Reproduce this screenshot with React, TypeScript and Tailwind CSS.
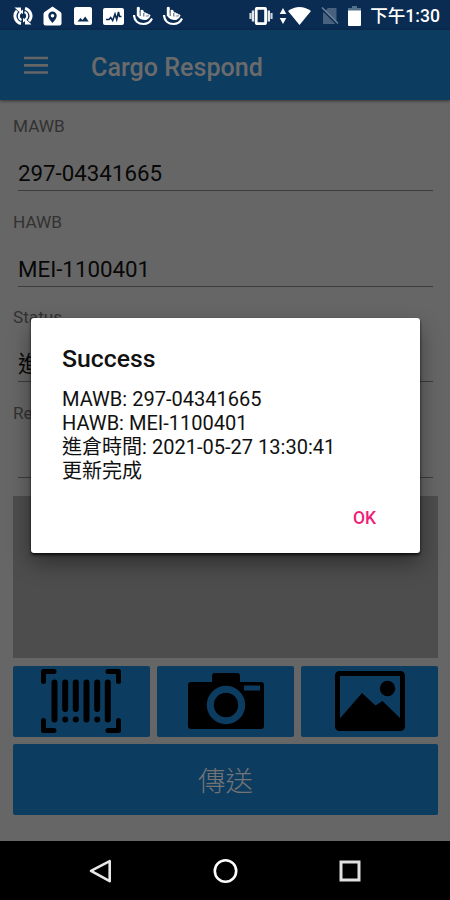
import type { ReactNode } from "react";

interface FieldProps {
    label: string;
    value?: string;
}

const Field = ({ label, value }: FieldProps) => {
    return (
        <div className="flex h-[95.6px] flex-col">
            <span className="h-5 text-[17.2px] leading-5 text-[#323232]">{label}</span>
            <div className="ml-[5px] mr-[5px] mt-[22px] flex h-[33px] items-center border-b-[1.5px] border-[#3c3c3c] text-[22.3px] text-[#080808]">
                {value}
            </div>
        </div>
    );
};

const ActionButton = ({ title, children }: { title: string; children: ReactNode }) => {
    return (
        <button
            type="button"
            aria-label={title}
            className="flex h-[71px] flex-1 items-center justify-center rounded-[2px] bg-[#0d3c61]"
        >
            {children}
        </button>
    );
};

const SyncIcon = () => (
    <svg width="20" height="20" viewBox="0 0 20 20" fill="none" stroke="#fff" strokeWidth="3">
        <path d="M8 17.5A7.7 7.7 0 0 1 4 4.800" />
        <path d="M12 2.500a7.700 7.700 0 0 1 4 12.700" />
        <path d="M8.500 14A4.200 4.200 0 0 1 8 6.400M11.500 6a4.200 4.200 0 0 1 .5 7.600" strokeWidth="2" />
        <path d="M1.500 1.500h6.500v6zM18.500 18.500H12v-6z" fill="#fff" stroke="none" />
        <path d="M10 3.500v4.500L6.800 5.700zM10 16.500V12l3.200 2.300z" fill="#fff" stroke="none" />
    </svg>
);

const HomePinIcon = () => (
    <svg width="19" height="20" viewBox="0 0 19 20">
        <path d="M9.500.5 1.500 6Q.5 7 .5 8v9.500q0 2 2 2h14q2 0 2-2V8q0-1-1-2z" fill="#fff" />
        <path d="M9.500 5.500a4.200 4.200 0 0 0-4.200 4.200c0 3 4.200 7.300 4.200 7.300s4.200-4.300 4.200-7.300a4.200 4.200 0 0 0-4.200-4.200z" fill="#0a2b52" />
        <circle cx="9.500" cy="9.700" r="1.800" fill="#fff" />
    </svg>
);

const ImageIcon = () => (
    <svg width="18" height="18" viewBox="0 0 18 18">
        <rect width="18" height="18" rx="2" fill="#fff" />
        <path d="m3.500 14.500 3-3.500 2 2 2.700-3.500 3.500 5z" fill="#0a2b52" />
    </svg>
);

const ActivityIcon = () => (
    <svg width="21" height="17" viewBox="0 0 21 17">
        <rect width="21" height="17" rx="2" fill="#fff" />
        <path d="M3 11.500h3l1.700-2 2 3L12 6l1.700 5.500L15.500 4l1 4.500h2" fill="none" stroke="#0a2b52" strokeWidth="1.600" />
    </svg>
);

const TouchIcon = () => (
    <svg width="20" height="20" viewBox="0 0 20 20">
        <path
            d="M3.800 1.500q1.500-1.500 3 0V7l.8-3q1.300-.8 2.700.3l.7 2.200q1.500-.5 2.300.8 1.400-.3 2 .9 1.700-.2 2.200 1.200-.7 3-4.200 4.600Q7 14.500 3.800 9.500z"
            fill="#fff"
        />
        <path d="M7.200 4.500V10M10.800 7v3.500" stroke="#0a2b52" strokeWidth=".8" />
        <path d="M12.800 9.800q2 .5 3-.3" fill="none" stroke="#7f91a6" strokeWidth="1.200" />
        <path d="M1 9c.3 5.700 4.300 9 9.500 9 4 0 7-2.300 8.500-5.500" fill="none" stroke="#fff" strokeWidth="2.200" />
    </svg>
);

const StatusBar = () => {
    return (
        <div className="flex h-[30px] items-center bg-[#0a2b52] pl-[13px] pr-[10px] pt-[2px]">
            <div className="flex items-center">
                <SyncIcon />
                <span className="ml-[10px]"><HomePinIcon /></span>
                <span className="ml-3"><ImageIcon /></span>
                <span className="ml-[11px]"><ActivityIcon /></span>
                <span className="ml-[9px]"><TouchIcon /></span>
                <span className="ml-[10px]"><TouchIcon /></span>
            </div>
            <div className="ml-auto flex items-center">
                <svg width="24" height="18" viewBox="0 0 24 18">
                    <path d="M1.500 6v6M22.500 6v6" stroke="#cbd3dd" strokeWidth="2.200" />
                    <path d="M4 3.500v11M19.800 3.500v11" stroke="#e5e9ee" strokeWidth="2.400" />
                    <rect x="7.200" y="1.300" width="9.400" height="15.400" rx="1" fill="none" stroke="#fff" strokeWidth="2.800" />
                </svg>
                <svg className="ml-[6px]" width="8" height="16" viewBox="0 0 8 16">
                    <path d="M4 0 7.300 6H.7zM4 16l3.300-6H.7z" fill="#fff" />
                </svg>
                <svg className="ml-px" width="23" height="18" viewBox="0 0 23 18">
                    <path d="M0 4Q11.500-4 23 4L11.500 18z" fill="#fff" />
                </svg>
                <svg className="ml-[10px]" width="18" height="18" viewBox="0 0 18 18">
                    <path d="M7 1h8.500v16H2V6z" fill="#48617f" />
                    <path d="m.5 1.500 16 16" stroke="#0a2b52" strokeWidth="2.200" />
                    <path d="m1 .5 16 16" stroke="#71859b" strokeWidth="1.400" />
                </svg>
                <svg className="ml-[9px]" width="13" height="20" viewBox="0 0 13 20">
                    <path d="M4 0h5v2h4v4H0V2h4z" fill="#54708a" />
                    <path d="M0 4.500h13V19q0 1-1 1H1q-1 0-1-1z" fill="#fff" />
                </svg>
                <span className="ml-[9px] whitespace-nowrap text-[17.600px] font-medium leading-5 text-white">下午1:30</span>
            </div>
        </div>
    );
};

const NavigationBar = () => {
    return (
        <div className="flex h-[59px] items-center justify-center gap-[99px] bg-black">
            <svg width="26" height="26" viewBox="0 0 26 26" fill="none" stroke="#e8e8e8" strokeWidth="2.600" strokeLinejoin="round">
                <path d="M22.700 3.200v20L4 12.900z" />
            </svg>
            <svg width="26" height="26" viewBox="0 0 26 26" fill="none" stroke="#fff" strokeWidth="2.600">
                <circle cx="13.500" cy="13" r="10.700" />
            </svg>
            <svg width="26" height="26" viewBox="0 0 26 26" fill="none" stroke="#e0e0e0" strokeWidth="3">
                <rect x="4" y="4" width="18" height="18" />
            </svg>
        </div>
    );
};

const SuccessDialog = () => {
    return (
        <div
            role="dialog"
            className="absolute left-[31px] top-[318px] flex h-[235px] w-[389px] flex-col rounded-[3px] bg-white px-[31px] shadow-[0_2px_3px_rgba(0,0,0,0.75),0_10px_22px_rgba(0,0,0,0.4)]"
        >
            <h2 className="mt-[26px] text-[24.800px] font-medium leading-[30px] text-[#111]">Success</h2>
            <div className="mt-[13px] whitespace-nowrap text-[20.050px] leading-[24px] text-[#111]">
                <p>MAWB: 297-04341665</p>
                <p>HAWB: MEI-1100401</p>
                <p>進倉時間: 2021-05-27 13:30:41</p>
                <p>更新完成</p>
            </div>
            <button type="button" className="mb-[25px] mr-[13px] mt-auto self-end text-[17.500px] font-medium leading-5 text-[#f01e76]">
                OK
            </button>
        </div>
    );
};

const App = () => {
    return (
        <div className="relative flex h-[900px] w-[450px] flex-col overflow-hidden bg-[#666] font-['Roboto','Noto_Sans_CJK_TC',sans-serif]">
            <StatusBar />
            <header className="flex h-[70px] shrink-0 items-center bg-[#0d3c61] pl-6 shadow-[0_1px_3px_rgba(0,0,0,0.5)]">
                <svg width="24" height="18" viewBox="0 0 24 18" stroke="#666" strokeWidth="2.700">
                    <path d="M0 2h24M0 9.300h24M0 16.500h24" />
                </svg>
                <h1 className="ml-[43px] mt-[5px] text-[25.100px] font-medium text-[#6b6b6b]">Cargo Respond</h1>
            </header>
            <main className="flex flex-1 flex-col pl-[13px] pr-3 pt-4">
                <Field label="MAWB" value="297-04341665" />
                <Field label="HAWB" value="MEI-1100401" />
                <Field label="Status" value="進倉" />
                <Field label="Remark" />
                <div className="-mt-[2.400px] h-[162px] bg-[#4d4d4d]" />
                <div className="mt-2 flex gap-[7.500px]">
                    <ActionButton title="掃描">
                        <svg width="80" height="64" viewBox="0 0 80 64" fill="none" stroke="#000" strokeLinecap="round">
                            <path
                                d="M2.500 12.500v-10H13M67 2.500h10.500v10M2.500 51.500v10H13M67 61.500h10.500v-10"
                                strokeWidth="5"
                                strokeLinejoin="round"
                            />
                            <path
                                d="M13.500 13.500v37M24.200 13.500v26.500M34.800 13.500v26.500M45.500 13.500v37M56.200 13.500v26.500M66.800 13.500v37M24.200 50.400v.1M34.800 50.400v.1M56.200 50.400v.1"
                                strokeWidth="6"
                            />
                        </svg>
                    </ActionButton>
                    <ActionButton title="相機">
                        <svg width="76" height="58" viewBox="0 0 76 58">
                            <path d="M24 11V4q0-3 3-3h22q3 0 3 3v6h21q3 0 3 3v41q0 3-3 3H3q-3 0-3-3V13q0-3 3-3h21z" fill="#000" />
                            <circle cx="38" cy="33" r="15.700" fill="none" stroke="#0d3c61" strokeWidth="7" />
                            <rect x="56" y="13.500" width="16" height="5" fill="#0d3c61" />
                        </svg>
                    </ActionButton>
                    <ActionButton title="相簿">
                        <svg width="70" height="60" viewBox="0 0 70 60">
                            <rect x="2.500" y="2.500" width="65" height="55" rx="2" fill="none" stroke="#000" strokeWidth="5" />
                            <path d="m4 48.500 23-26.500 13.500 12.500 7-4.500L66 48v11H4z" fill="#000" />
                            <circle cx="52.500" cy="17.500" r="7.700" fill="#000" />
                        </svg>
                    </ActionButton>
                </div>
                <button
                    type="button"
                    className="mt-[7px] h-[71px] rounded-[2px] bg-[#0d3c61] pt-1 text-[27.500px] font-light text-[#747474]"
                >
                    傳送
                </button>
            </main>
            <NavigationBar />
            <SuccessDialog />
        </div>
    );
};

export default App;
